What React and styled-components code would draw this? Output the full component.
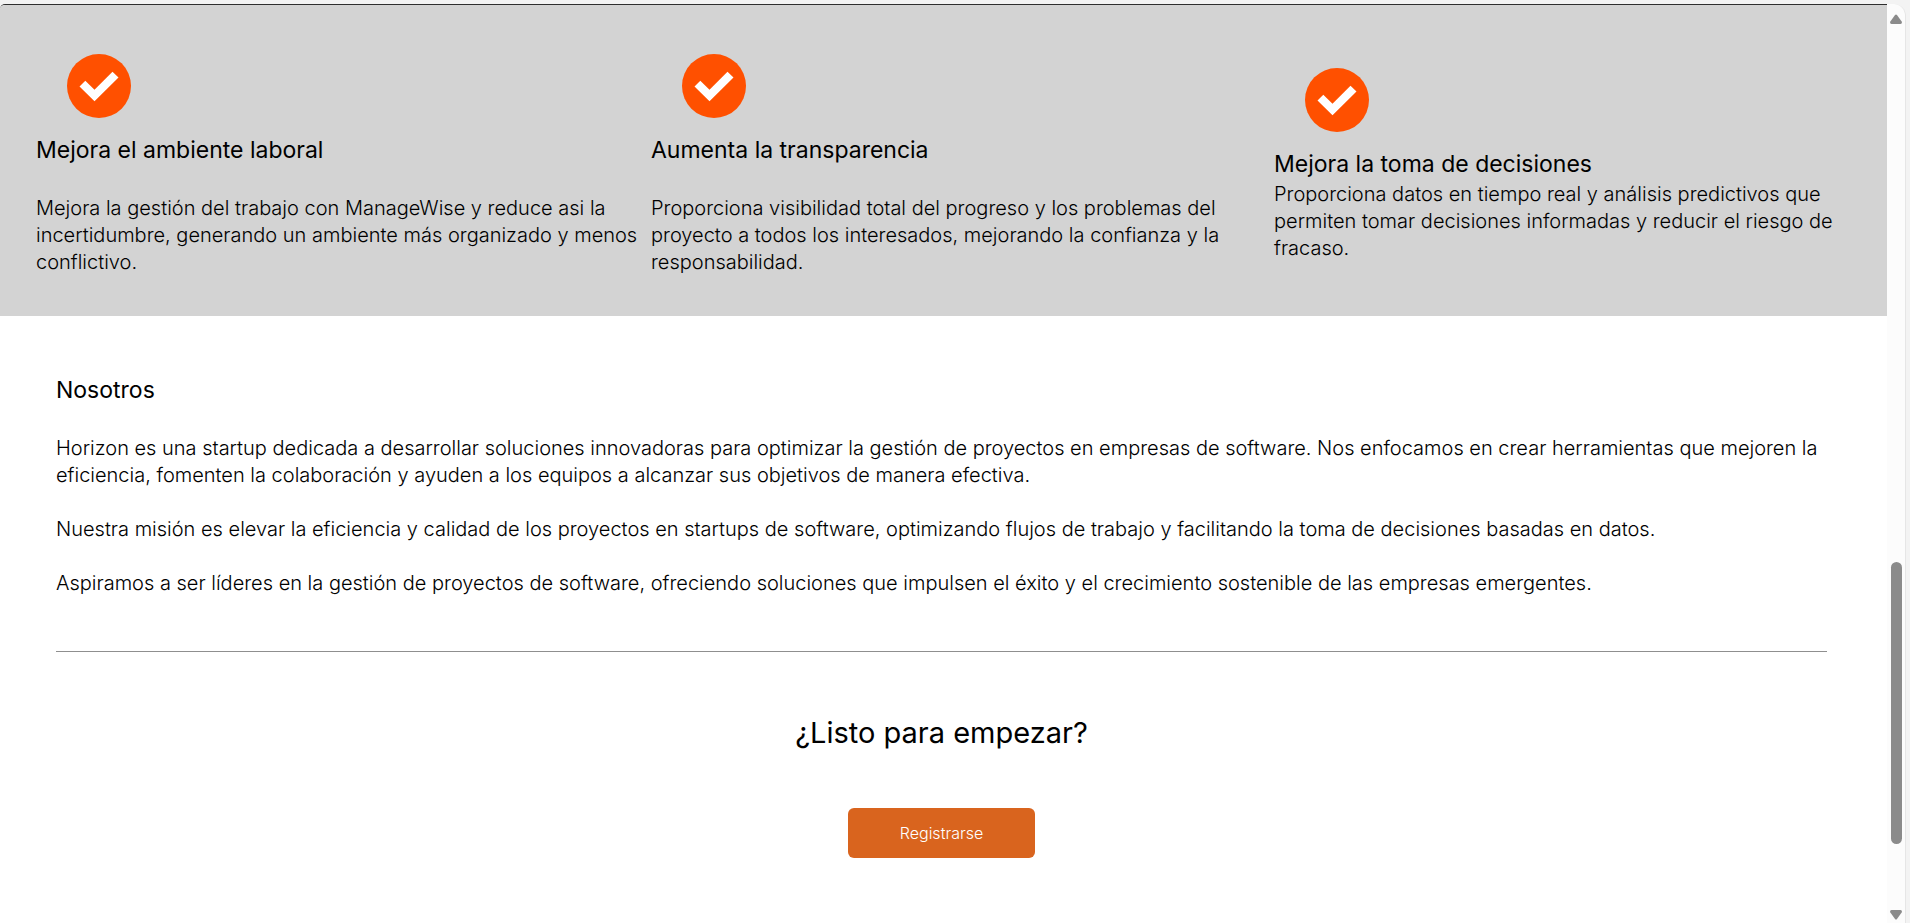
import React from "react";
import styled, { createGlobalStyle } from "styled-components";

const GlobalStyle = createGlobalStyle`
  *, *::before, *::after { box-sizing: border-box; }
  html, body { margin: 0; }
  body {
    overflow: hidden;
    background: #f3f3f3;
    color: #000;
    font-family: Inter, "Liberation Sans", sans-serif;
    font-size: 20px;
    font-weight: 300;
    line-height: 27px;
  }
  h2, h3, p { margin: 0; }
`;

const Frame = styled.div`
  display: flex;
  height: 100vh;
  padding: 4px 4px 0 0;
`;

const Content = styled.main`
  flex: 1;
  min-width: 0;
  overflow: hidden;
  border-top: 1px solid #2e2e2e;
  border-top-left-radius: 5px;
  background: #fff;
`;

const Benefits = styled.section`
  display: grid;
  grid-template-columns: 615fr 623fr 613fr;
  align-items: center;
  padding: 49px 0 40px 36px;
  background: #d3d3d3;
`;

const Benefit = styled.article`
  display: flex;
  flex-direction: column;
  gap: ${(p) => (p.$compact ? "3px" : "31px")};
  white-space: nowrap;
`;

const BenefitHead = styled.header`
  display: flex;
  flex-direction: column;
  gap: 18px;
`;

const CheckIcon = styled.svg`
  width: 64px;
  height: 64px;
  margin-left: 31px;
`;

const Heading = styled.h3`
  font-size: 23px;
  font-weight: 400;
  line-height: 28px;
`;

const Lower = styled.div`
  padding: 60px 60px 0 56px;
`;

const About = styled.section`
  padding-bottom: 54px;
  border-bottom: 1px solid #8f8f8f;
`;

const AboutText = styled.div`
  display: flex;
  flex-direction: column;
  gap: 27px;
  padding-top: 31px;
`;

const Start = styled.section`
  display: flex;
  flex-direction: column;
  align-items: center;
  gap: 56px;
  padding-top: 62px;
`;

const Title = styled.h2`
  font-size: 29px;
  font-weight: 400;
  line-height: 38px;
`;

const Register = styled.button`
  width: 187px;
  height: 50px;
  border: 0;
  border-radius: 6px;
  background: #d9641e;
  color: #fff;
  font: 300 16px Inter, "Liberation Sans", sans-serif;
`;

const ScrollTrack = styled.div`
  display: flex;
  flex-direction: column;
  align-items: center;
  width: 19px;
  padding: 10px 0 3px;
  border-right: 1px solid #e6e6e6;
  border-top-right-radius: 12px;
  background: #fcfcfc;
`;

const Arrow = styled.svg`
  flex: none;
  width: 12px;
  height: 10px;
  fill: #8b8b8b;
`;

const Before = styled.div`
  flex: 538;
`;

const Thumb = styled.div`
  flex: 282;
  width: 11px;
  border-radius: 6px;
  background: #8b8b8b;
`;

const After = styled.div`
  flex: 66;
`;

const benefits = [
  {
    title: "Mejora el ambiente laboral",
    lines: [
      "Mejora la gestión del trabajo con ManageWise y reduce asi la",
      "incertidumbre, generando un ambiente más organizado y menos",
      "conflictivo.",
    ],
  },
  {
    title: "Aumenta la transparencia",
    lines: [
      "Proporciona visibilidad total del progreso y los problemas del",
      "proyecto a todos los interesados, mejorando la confianza y la",
      "responsabilidad.",
    ],
  },
  {
    title: "Mejora la toma de decisiones",
    compact: true,
    lines: [
      "Proporciona datos en tiempo real y análisis predictivos que",
      "permiten tomar decisiones informadas y reducir el riesgo de",
      "fracaso.",
    ],
  },
];

function Lines({ lines }) {
  return (
    <p>
      {lines.map((line, i) => (
        <React.Fragment key={line}>
          {i > 0 && <br />}
          {line}
        </React.Fragment>
      ))}
    </p>
  );
}

export default function App() {
  return (
    <>
      <GlobalStyle />
      <Frame>
        <Content>
          <Benefits>
            {benefits.map((b) => (
              <Benefit key={b.title} $compact={b.compact}>
                <BenefitHead>
                  <CheckIcon viewBox="0 0 64 64" aria-hidden="true">
                    <circle cx="32" cy="32" r="32" fill="#ff5000" />
                    <path d="M12.5 32.5 18.3 26.7 27.5 35.8 45.5 17.8 51.5 23.6 27.5 47.3Z" fill="#fff" />
                  </CheckIcon>
                  <Heading>{b.title}</Heading>
                </BenefitHead>
                <Lines lines={b.lines} />
              </Benefit>
            ))}
          </Benefits>
          <Lower>
            <About>
              <Heading>Nosotros</Heading>
              <AboutText>
                <p>
                  Horizon es una startup dedicada a desarrollar soluciones innovadoras para optimizar la gestión de
                  proyectos en empresas de software. Nos enfocamos en crear herramientas que mejoren la eficiencia,
                  fomenten la colaboración y ayuden a los equipos a alcanzar sus objetivos de manera efectiva.
                </p>
                <p>
                  Nuestra misión es elevar la eficiencia y calidad de los proyectos en startups de software,
                  optimizando flujos de trabajo y facilitando la toma de decisiones basadas en datos.
                </p>
                <p>
                  Aspiramos a ser líderes en la gestión de proyectos de software, ofreciendo soluciones que impulsen
                  el éxito y el crecimiento sostenible de las empresas emergentes.
                </p>
              </AboutText>
            </About>
            <Start>
              <Title>¿Listo para empezar?</Title>
              <Register type="button">Registrarse</Register>
            </Start>
          </Lower>
        </Content>
        <ScrollTrack aria-hidden="true">
          <Arrow viewBox="0 0 12 10">
            <path d="M5 1Q6 0 7 1L12 8Q12 10 10.500 10H1.500Q0 10 0 8Z" />
          </Arrow>
          <Before />
          <Thumb />
          <After />
          <Arrow viewBox="0 0 12 10">
            <path d="M5 9Q6 10 7 9L12 2Q12 0 10.500 0H1.500Q0 0 0 2Z" />
          </Arrow>
        </ScrollTrack>
      </Frame>
    </>
  );
}
